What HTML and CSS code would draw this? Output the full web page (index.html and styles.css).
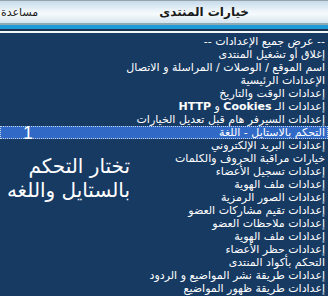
FILE: index.html
```html
<!DOCTYPE html>
<html lang="ar" dir="rtl">
<head>
  <meta charset="UTF-8">
  <title>خيارات المنتدى</title>
  <link rel="stylesheet" href="styles.css">
</head>
<body>
  <div class="head">
    <div class="head-title">خيارات المنتدى</div>
    <div class="head-help">مساعدة</div>
  </div>
  <div class="strip"></div>
  <div class="panel">
    <ul class="options">
      <li>-- عرض جميع الإعدادات --</li>
      <li>إغلاق أو تشغيل المنتدى</li>
      <li>اسم الموقع / الوصلات / المراسلة و الاتصال</li>
      <li>الإعدادات الرئيسية</li>
      <li>إعدادات الوقت والتاريخ</li>
      <li>إعدادات الـ <b>Cookies</b> و <b>HTTP</b></li>
      <li>إعدادات السيرفر هام قبل تعديل الخيارات</li>
      <li class="selected">التحكم بالاستايل - اللغة</li>
      <li>إعدادات البريد الإلكتروني</li>
      <li>خيارات مراقبة الحروف والكلمات</li>
      <li>إعدادات تسجيل الأعضاء</li>
      <li>إعدادات ملف الهوية</li>
      <li>إعدادات الصور الرمزية</li>
      <li>إعدادات تقيم مشاركات العضو</li>
      <li>إعدادات ملاحظات العضو</li>
      <li>إعدادات ملف الهوية</li>
      <li>إعدادات حظر الأعضاء</li>
      <li>التحكم بأكواد المنتدى</li>
      <li>إعدادات طريقة نشر المواضيع و الردود</li>
      <li>إعدادات طريقة ظهور المواضيع</li>
    </ul>
    <div class="mark">1</div>
    <div class="note">تختار التحكم<br>بالستايل واللغه</div>
  </div>
</body>
</html>
```

FILE: styles.css
```css
body {
  margin: 0;
  width: 328px;
  height: 296px;
  overflow: hidden;
  background: #173a63;
  font-family: "DejaVu Sans", sans-serif;
}
.head {
  display: flex;
  align-items: center;
  height: 22px;
  border-top: 1px solid #9aa4ad;
  background: linear-gradient(#c6dbeb, #eef5fa 45%, #f6fafc 60%, #d3e3ee);
  color: #1a1a1a;
  font-size: 12px;
}
.head-title {
  flex: 1;
  text-align: center;
  padding-left: 42px;
  font-weight: bold;
}
.head-help {
  font-size: 11px;
  padding-left: 1px;
}
.strip {
  height: 12px;
  background: linear-gradient(#8ea9b4 0, #8ea9b4 2px, #1e9bd6 2px, #1e9bd6 6px, #1b3352 6px, #1b3352 8px, #f2f6f8 8px, #f2f6f8 10px, #173a63 10px);
}
.panel {
  position: relative;
}
.options {
  list-style: none;
  margin: 0;
  padding: 0 3px 0 0;
  color: #fff;
  font-size: 11px;
  line-height: 13px;
}
.options li {
  height: 13px;
  white-space: nowrap;
}
.options li.selected {
  background: #3169c6;
  outline: 1px dotted #c9d6ee;
  outline-offset: -1px;
  margin-right: -3px;
  padding-right: 3px;
}
.mark {
  position: absolute;
  left: 23px;
  top: 91px;
  color: #fff;
  font-family: "Liberation Sans", sans-serif;
  font-size: 18px;
  line-height: 15px;
}
.note {
  position: absolute;
  left: 0;
  top: 119px;
  width: 130px;
  text-align: right;
  color: #fff;
  font-size: 20px;
  line-height: 24px;
}
```
